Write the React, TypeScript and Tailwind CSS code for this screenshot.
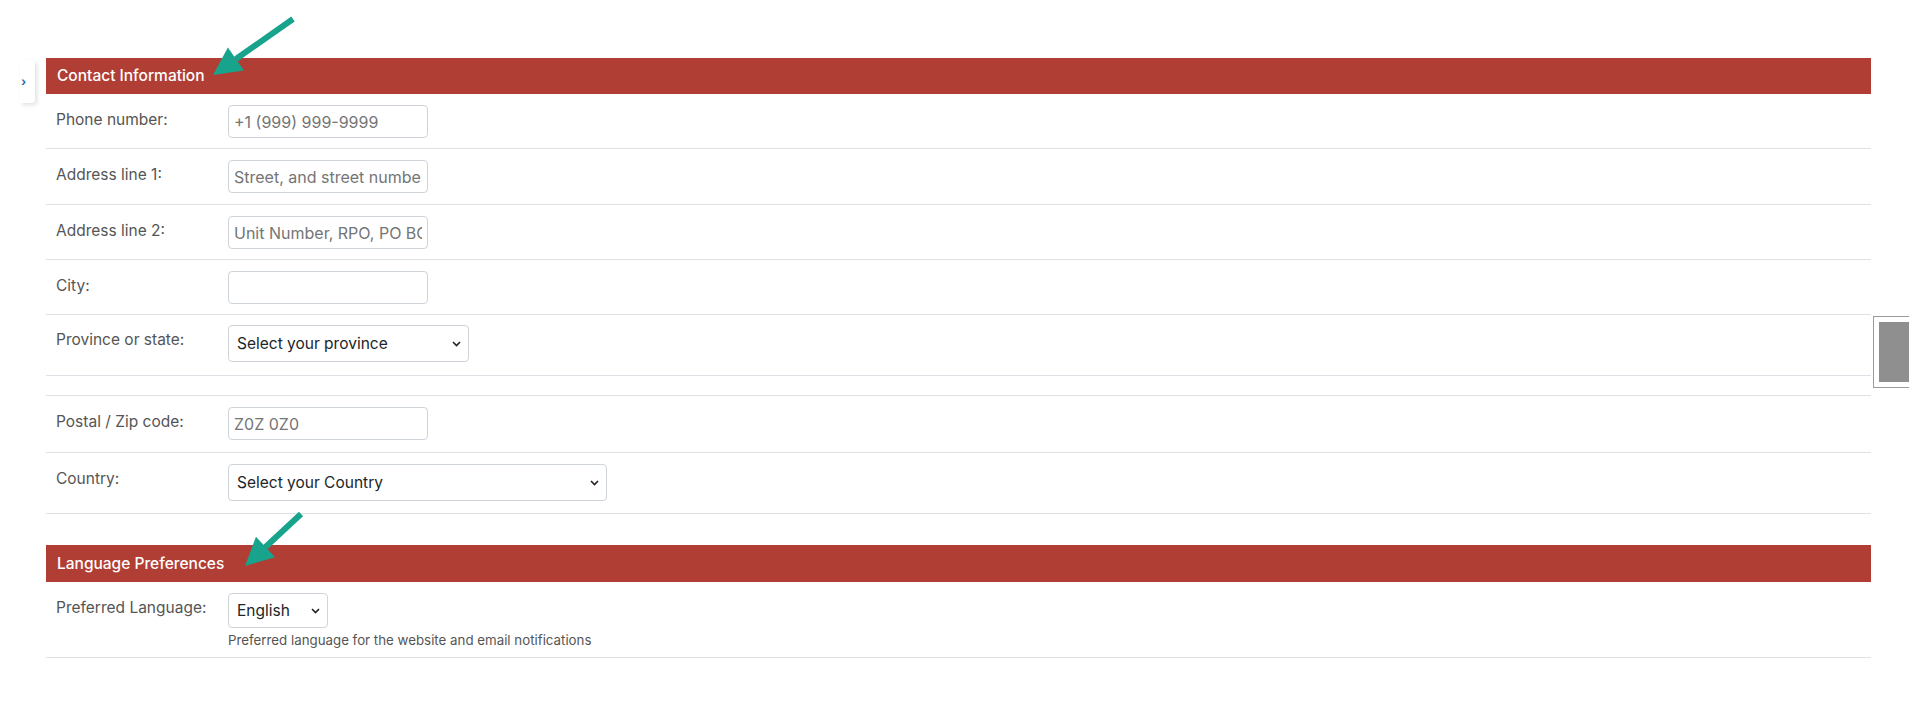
import React from 'react';

const font = { fontFamily: 'Inter, "Liberation Sans", sans-serif' };

type RowProps = {
  label?: string;
  children?: React.ReactNode;
  className?: string;
};

const Row: React.FC<RowProps> = ({ label, children, className }) => (
  <div className={`grid grid-cols-[182px_1fr] border-b border-[#dee2e6] ${className ?? ''}`}>
    <div className="pl-[10px] pt-[3px] text-[15.5px] leading-[24px] text-[#555]">{label}</div>
    <div>{children}</div>
  </div>
);

const TextInput: React.FC<{ placeholder?: string }> = ({ placeholder }) => (
  <input
    type="text"
    placeholder={placeholder}
    className="block w-[200px] h-[33px] rounded-[4px] border border-[#ced4da] bg-white px-[5px] text-[16px] text-[#212529] placeholder:text-[#757575] outline-none"
  />
);

const Select: React.FC<{ value: string; width: string; height: string }> = ({ value, width, height }) => (
  <div className={`relative ${width} ${height}`}>
    <select
      defaultValue={value}
      className="block h-full w-full appearance-none rounded-[4px] border border-[#ced4da] bg-white pl-[8px] pr-[24px] text-[15.5px] text-[#212529] outline-none"
    >
      <option>{value}</option>
    </select>
    <svg
      className="pointer-events-none absolute right-[8px] top-1/2 -translate-y-1/2"
      width="9"
      height="6"
      viewBox="0 0 9 6"
    >
      <polyline points="1,1 4.5,4.5 8,1" fill="none" stroke="#222" strokeWidth="1.6" />
    </svg>
  </div>
);

const SectionHeader: React.FC<{ title: string; className?: string }> = ({ title, className }) => (
  <div className={`flex items-center bg-[#b03e35] px-[11px] text-[15.5px] font-medium text-white ${className ?? ''}`}>
    {title}
  </div>
);

const Arrow: React.FC<{ x1: number; y1: number; x2: number; y2: number }> = ({ x1, y1, x2, y2 }) => {
  const ang = Math.atan2(y2 - y1, x2 - x1);
  const len = 28;
  const half = 14;
  const bx = x2 - len * Math.cos(ang);
  const by = y2 - len * Math.sin(ang);
  const px = -Math.sin(ang) * half;
  const py = Math.cos(ang) * half;
  return (
    <g>
      <line x1={x1} y1={y1} x2={bx} y2={by} stroke="#17a38c" strokeWidth="6" />
      <polygon points={`${x2},${y2} ${bx + px},${by + py} ${bx - px},${by - py}`} fill="#17a38c" />
    </g>
  );
};

export default function App() {
  return (
    <div className="relative h-[703px] w-full overflow-hidden bg-white" style={font}>
      {/* sidebar toggle */}
      <div className="absolute left-[20px] top-[60px] flex h-[43px] w-[15px] items-center rounded-r-[3px] bg-white shadow-[2px_2px_4px_rgba(0,0,0,0.12)]">
        <span className="ml-[1px] text-[12px] font-bold leading-none text-[#2a6fb0]">›</span>
      </div>

      <div className="ml-[46px] mr-[38px] pt-[58px]">
        <SectionHeader title="Contact Information" className="h-[36px]" />

        <Row label="Phone number:" className="pt-[11px] pb-[10px]">
          <TextInput placeholder="+1 (999) 999-9999" />
        </Row>
        <Row label="Address line 1:" className="pt-[11px] pb-[11px]">
          <TextInput placeholder="Street, and street number" />
        </Row>
        <Row label="Address line 2:" className="pt-[11px] pb-[10px]">
          <TextInput placeholder="Unit Number, RPO, PO BOX" />
        </Row>
        <Row label="City:" className="pt-[11px] pb-[10px]">
          <TextInput />
        </Row>
        <Row label="Province or state:" className="pt-[10px] pb-[13px]">
          <Select value="Select your province" width="w-[241px]" height="h-[37px]" />
        </Row>
        <div className="h-[20px] border-b border-[#dee2e6]" />
        <Row label="Postal / Zip code:" className="pt-[11px] pb-[12px]">
          <TextInput placeholder="Z0Z 0Z0" />
        </Row>
        <Row label="Country:" className="pt-[11px] pb-[12px]">
          <Select value="Select your Country" width="w-[379px]" height="h-[37px]" />
        </Row>

        <SectionHeader title="Language Preferences" className="mt-[31px] h-[37px]" />

        <Row label="Preferred Language:" className="pt-[11px] pb-[8px]">
          <Select value="English" width="w-[100px]" height="h-[35px]" />
          <div className="mt-[3px] text-[13.3px] leading-[18px] text-[#555]">
            Preferred language for the website and email notifications
          </div>
        </Row>
      </div>

      {/* clipped widget on the right edge */}
      <div className="absolute left-[1873px] top-[316px] h-[72px] w-[60px] border border-[#9a9a9a] bg-white p-[5px]">
        <div className="h-full w-full bg-[#8f8f8f]" />
      </div>

      {/* annotation arrows */}
      <svg className="pointer-events-none absolute left-0 top-0" width="1909" height="703">
        <Arrow x1={293} y1={19} x2={213} y2={75} />
        <Arrow x1={301} y1={514} x2={245} y2={566} />
      </svg>
    </div>
  );
}
